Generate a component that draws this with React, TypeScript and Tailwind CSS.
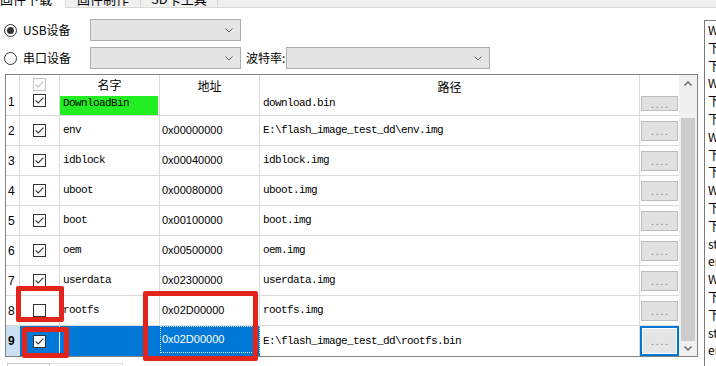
import React from 'react';

type Row = {
  n: number;
  name: string;
  addr: string;
  path: string;
  checked: boolean;
};

const rows: Row[] = [
  { n: 2, name: 'env', addr: '0x00000000', path: 'E:\\flash_image_test_dd\\env.img', checked: true },
  { n: 3, name: 'idblock', addr: '0x00040000', path: 'idblock.img', checked: true },
  { n: 4, name: 'uboot', addr: '0x00080000', path: 'uboot.img', checked: true },
  { n: 5, name: 'boot', addr: '0x00100000', path: 'boot.img', checked: true },
  { n: 6, name: 'oem', addr: '0x00500000', path: 'oem.img', checked: true },
  { n: 7, name: 'userdata', addr: '0x02300000', path: 'userdata.img', checked: true },
  { n: 8, name: 'rootfs', addr: '0x02D00000', path: 'rootfs.img', checked: false },
];

const logs = [
  'Wait For Maskrom Start Success',
  '下载Boot开始',
  '下载Boot成功',
  'Wait For Loader Start Success',
  '下载IDB开始',
  '下载IDB成功',
  'Wait For Loader Start Success',
  '下载固件开始',
  '下载固件成功',
  'Wait For Loader Start Success',
  '下载固件开始',
  '下载固件成功',
  'start to download...',
  'end of download',
  'Wait For Loader Start Success',
  '下载固件开始',
  '下载固件成功',
  'start to download...',
  'end of download',
];

const GRID = 'grid grid-cols-[14px_40px_100px_100px_380px_39px]';
const MONO = "font-['Liberation_Mono',monospace] text-[11px] tracking-[-0.6px]";
const SANS = "font-['Liberation_Sans',sans-serif]";

function Check({ checked = true, faded = false }: { checked?: boolean; faded?: boolean }) {
  const c = faded ? '#c4c4c4' : '#333333';
  return (
    <span
      className={`block w-[13px] h-[13px] bg-white border ${faded ? 'border-[#c4c4c4]' : 'border-[#333333]'}`}
    >
      {checked && (
        <svg width="11" height="11" viewBox="0 0 11 11" className="block">
          <path d="M1.6 5.4 L4.2 8 L9.4 2.6" fill="none" stroke={c} strokeWidth="1.1" />
        </svg>
      )}
    </span>
  );
}

function Chevron() {
  return (
    <svg width="8" height="5" viewBox="0 0 8 5" className="block">
      <polyline points="0.5,0.5 4,4 7.5,0.5" fill="none" stroke="#5a5a5a" strokeWidth="1" />
    </svg>
  );
}

function Radio({ on }: { on?: boolean }) {
  return (
    <span className="flex w-[13px] h-[13px] items-center justify-center rounded-full border border-[#333333] bg-white">
      {on && <span className="w-[7px] h-[7px] rounded-full bg-[#333333]" />}
    </span>
  );
}

function Dots() {
  return (
    <span className={`${SANS} text-[10px] leading-[10px] tracking-[2px] pl-[2px] pt-[2px] text-[#6e6e6e]`}>....</span>
  );
}

function Scrollbar() {
  return (
    <div className="w-[18px] flex flex-col bg-[#f0f0f0]">
      <div className="h-[17px] flex items-center justify-center">
        <svg width="8" height="5" viewBox="0 0 8 5">
          <polyline points="0.5,4.5 4,1 7.5,4.5" fill="none" stroke="#606060" strokeWidth="1.3" />
        </svg>
      </div>
      <div className="h-[26px]" />
      <div className="flex-1 mx-[2px] bg-[#cdcdcd]" />
      <div className="h-[15px] flex items-center justify-center">
        <svg width="8" height="5" viewBox="0 0 8 5">
          <polyline points="0.5,0.5 4,4 7.5,0.5" fill="none" stroke="#606060" strokeWidth="1.3" />
        </svg>
      </div>
    </div>
  );
}

export default function App() {
  return (
    <div className="relative w-[716px] h-[366px] overflow-hidden bg-white text-black font-['Noto_Sans_CJK_SC',sans-serif]">
      {/* tabs, only their lower edge shows */}
      <div className="flex h-[8px] overflow-hidden bg-[#f0f0f0] text-[13px]">
        <div className="h-[17px] -mt-[9px] leading-[16px] pr-[13px] bg-white border-r border-[#d9d9d9] whitespace-nowrap">
          固件下载
        </div>
        <div className="h-[17px] -mt-[9px] leading-[16px] px-[11px] border-r border-b border-[#d9d9d9] whitespace-nowrap">
          固件制作
        </div>
        <div className="h-[17px] -mt-[9px] leading-[16px] px-[10px] border-r border-b border-[#d9d9d9] whitespace-nowrap">
          SD卡工具
        </div>
        <div className="flex-1 border-b border-[#d9d9d9]" />
      </div>

      <div className="flex">
        <div className="w-[704px] shrink-0 pl-[4px]">
          {/* device pickers */}
          <div className="mt-[11px] flex items-center h-[22px] text-[12px]">
            <div className="w-[86px] flex items-center">
              <Radio on />
              <span className="ml-[6px]">USB设备</span>
            </div>
            <div className="w-[151px] h-[22px] border border-[#adadad] bg-[#e5e5e5] flex items-center justify-end pr-[7px]">
              <Chevron />
            </div>
          </div>
          <div className="mt-[6px] flex items-center h-[22px] text-[12px]">
            <div className="w-[86px] flex items-center">
              <Radio />
              <span className="ml-[6px]">串口设备</span>
            </div>
            <div className="w-[151px] h-[22px] border border-[#adadad] bg-[#e5e5e5] flex items-center justify-end pr-[7px]">
              <Chevron />
            </div>
            <span className="w-[45px] pl-[5px]">波特率:</span>
            <div className="w-[204px] h-[22px] border border-[#adadad] bg-[#e5e5e5] flex items-center justify-end pr-[7px]">
              <Chevron />
            </div>
          </div>

          {/* partition table */}
          <div className="ml-[1px] mt-[5px] w-[693px] h-[283px] border border-[#828282] flex">
            <div className="w-[673px]">
              {/* header merged with row 1 */}
              <div className={`${GRID} h-[41px]`}>
                <div className={`${SANS} border-r border-b border-[#dadada] pl-[2px] pt-[20px] text-[12px] leading-[14px]`}>1</div>
                <div className="border-r border-b border-[#dadada] flex flex-col items-center">
                  <div className="mt-[3px]">
                    <Check faded />
                  </div>
                  <div className="mt-[3px]">
                    <Check />
                  </div>
                </div>
                <div className="border-r border-b border-[#dadada] flex flex-col">
                  <div className="h-[21px] leading-[19px] text-center text-[12px]">名字</div>
                  <div className={`${MONO} flex-1 mr-[1px] bg-[#22ee22] pl-[3px] leading-[14px]`}>DownloadBin</div>
                </div>
                <div className="border-r border-b border-[#dadada]">
                  <div className="h-[21px] leading-[21px] text-center text-[12px]">地址</div>
                </div>
                <div className="border-r border-b border-[#dadada] flex flex-col">
                  <div className="h-[21px] pt-[3px] leading-[18px] text-center text-[12px]">路径</div>
                  <div className={`${MONO} pl-[3px] leading-[14px]`}>download.bin</div>
                </div>
                <div className="border-b border-[#dadada] pt-[21px] pl-[1px]">
                  <div className="w-[37px] h-[15px] bg-[#e1e1e1] border border-[#bdbdbd] flex items-center justify-center">
                    <Dots />
                  </div>
                </div>
              </div>

              {rows.map((r) => (
                <div key={r.n} className={`${GRID} h-[30px]`}>
                  <div className={`${SANS} border-r border-b border-[#dadada] pl-[2px] flex items-center text-[12px]`}>{r.n}</div>
                  <div className="border-r border-b border-[#dadada] flex items-center justify-center">
                    <Check checked={r.checked} />
                  </div>
                  <div className={`${MONO} border-r border-b border-[#dadada] pl-[3px] flex items-center`}>{r.name}</div>
                  <div className={`${SANS} border-r border-b border-[#dadada] pl-[2px] flex items-center text-[11px]`}>{r.addr}</div>
                  <div className={`${MONO} border-r border-b border-[#dadada] pl-[3px] flex items-center whitespace-pre`}>{r.path}</div>
                  <div className="border-b border-[#dadada] pl-[1px] flex items-center">
                    <div className="w-[37px] h-[20px] bg-[#e1e1e1] border border-[#bdbdbd] flex items-center justify-center">
                      <Dots />
                    </div>
                  </div>
                </div>
              ))}

              {/* selected row */}
              <div className={`${GRID} h-[30px]`}>
                <div className={`${SANS} border-r border-[#dadada] bg-[#cce0f5] pl-[2px] flex items-center text-[12px] font-bold`}>9</div>
                <div className="border-r border-[#e6f0fa] bg-[#0078d7] flex items-center justify-center">
                  <Check />
                </div>
                <div className="bg-[#0078d7]" />
                <div className="bg-[#0078d7] flex pb-[3px]">
                  <div className={`${SANS} flex-1 flex items-center pl-[1px] border border-dotted border-[#d6e8f8] text-white text-[11px]`}>
                    0x02D00000
                  </div>
                </div>
                <div className={`${MONO} border-r border-[#dadada] pl-[3px] flex items-center whitespace-pre`}>
                  E:\flash_image_test_dd\rootfs.bin
                </div>
                <div className="border-2 border-[#0078d7] bg-white p-[1px] flex">
                  <div className="flex-1 bg-[#e5e5e5] flex items-center justify-center">
                    <Dots />
                  </div>
                </div>
              </div>
            </div>
            <Scrollbar />
          </div>

          {/* lower buttons, cut off */}
          <div className="mt-[6px] flex">
            <div className="ml-[3px] w-[43px] h-[10px] border-t border-l border-r border-[#c8c8c8]" />
            <div className="w-[73px] h-[10px] border-t border-r border-[#e0e0e0]" />
          </div>
        </div>

        {/* log output */}
        <div className="mt-[12px] w-[200px] h-[400px] shrink-0 border-l border-t border-[#7a7a7a] pl-[3px] text-[12px] leading-[17.8px] whitespace-nowrap">
          {logs.map((l, i) => (
            <div key={i}>{l}</div>
          ))}
        </div>
      </div>

      {/* red annotation frames */}
      <div className="absolute left-[16px] top-[286px] w-[48px] h-[36px] border-[5px] border-[#e3241b] rounded-[2px]" />
      <div className="absolute left-[22px] top-[327px] w-[47px] h-[31px] border-[5px] border-[#e3241b] rounded-[2px]" />
      <div className="absolute left-[143px] top-[291px] w-[115px] h-[70px] border-[5px] border-[#e3241b] rounded-[2px]" />
    </div>
  );
}
